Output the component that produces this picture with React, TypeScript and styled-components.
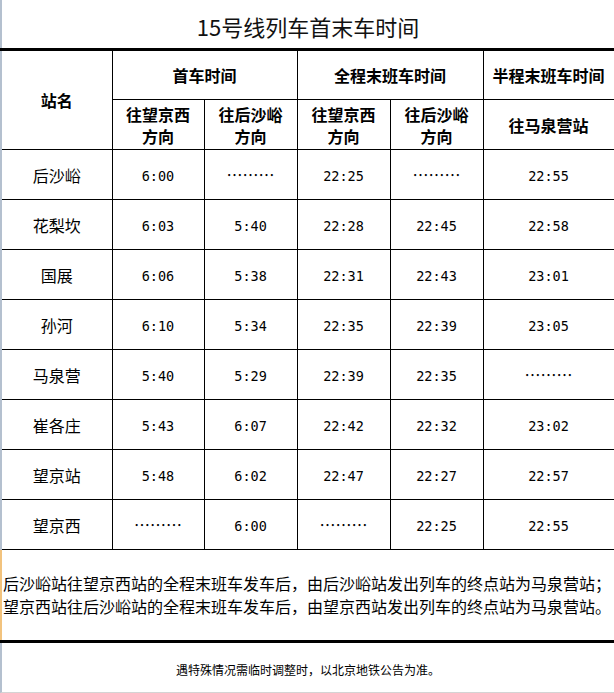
import React from "react";
import styled, { createGlobalStyle } from "styled-components";

const GlobalStyle = createGlobalStyle`
  html, body {
    margin: 0;
    padding: 0;
    background: #fff;
  }
  body {
    font-family: "Noto Sans CJK SC", "Noto Sans", sans-serif;
    color: #000;
  }
`;

const STRIP = "#b4c0cf";
const NOTE_STRIP = "#f2c37e";
const WIDTHS = [111, 92, 93, 93, 93, 131];
const GRID = [113, 92, 93, 93, 93, 128];

type Row = { name: string; times: (string | null)[] };

const rows: Row[] = [
  { name: "后沙峪", times: ["6:00", null, "22:25", null, "22:55"] },
  { name: "花梨坎", times: ["6:03", "5:40", "22:28", "22:45", "22:58"] },
  { name: "国展", times: ["6:06", "5:38", "22:31", "22:43", "23:01"] },
  { name: "孙河", times: ["6:10", "5:34", "22:35", "22:39", "23:05"] },
  { name: "马泉营", times: ["5:40", "5:29", "22:39", "22:35", null] },
  { name: "崔各庄", times: ["5:43", "6:07", "22:42", "22:32", "23:02"] },
  { name: "望京站", times: ["5:48", "6:02", "22:47", "22:27", "22:57"] },
  { name: "望京西", times: [null, "6:00", null, "22:25", "22:55"] },
];

const Sheet = styled.div`
  width: 614px;
  height: 693px;
  overflow: hidden;
`;

const TitleBar = styled.div`
  height: 48px;
  box-sizing: border-box;
  border-left: 2px solid ${STRIP};
  padding-top: 3px;
  display: flex;
  align-items: center;
  justify-content: center;
  font-size: 22px;
  color: #111;
`;

const Table = styled.table`
  width: 613px;
  border-collapse: collapse;
  table-layout: fixed;
  border-top: 3px solid #000;
`;

const GridLineRow = styled.tr`
  height: 50px;
`;

const Cell = styled.td<{ $first?: boolean; $head?: boolean }>`
  border: 1px solid #000;
  ${(p) => (p.$first ? `border-left: 2px solid ${STRIP};` : "")}
  padding: 0;
  text-align: center;
  vertical-align: middle;
  font-size: 16px;
  line-height: 22px;
  font-weight: ${(p) => (p.$head ? 700 : 400)};
`;

const Time = styled.span`
  font-family: "DejaVu Sans Mono", "Liberation Mono", monospace;
  font-size: 13.5px;
`;

const Dots = styled.span`
  font-family: "Noto Sans CJK SC", sans-serif;
  font-size: 16px;
  vertical-align: 2px;
`;

const NoteCell = styled.td`
  border: 1px solid #000;
  border-left: 2px solid ${NOTE_STRIP};
  border-bottom: 3px solid #000;
  height: 90px;
  padding: 0 0 0 1px;
  text-align: left;
  vertical-align: middle;
  font-size: 16px;
  line-height: 23.5px;
  white-space: nowrap;
`;

const NoteLine = styled.div``;

const Footer = styled.div`
  height: 49px;
  box-sizing: border-box;
  border-left: 2px solid ${STRIP};
  padding-top: 3px;
  display: flex;
  align-items: center;
  justify-content: center;
  font-size: 12px;
`;

const GridRow = styled.div`
  display: flex;
  height: 8px;
  border-top: 1px solid #d4d4d4;
  border-left: 2px solid ${STRIP};
`;

const GridCell = styled.div<{ $w: number }>`
  width: ${(p) => p.$w}px;
  flex: none;
  box-sizing: border-box;
  border-right: 1px solid #e2e2e2;
`;

function Value({ v }: { v: string | null }) {
  return v ? <Time>{v}</Time> : <Dots lang="zh-Hans">………</Dots>;
}

export default function App() {
  return (
    <Sheet>
      <GlobalStyle />
      <TitleBar>15号线列车首末车时间</TitleBar>
      <Table>
        <colgroup>
          {WIDTHS.map((w, i) => (
            <col key={i} style={{ width: w }} />
          ))}
        </colgroup>
        <tbody>
          <GridLineRow>
            <Cell $first $head rowSpan={2}>
              站名
            </Cell>
            <Cell $head colSpan={2}>
              首车时间
            </Cell>
            <Cell $head colSpan={2}>
              全程末班车时间
            </Cell>
            <Cell $head>半程末班车时间</Cell>
          </GridLineRow>
          <GridLineRow>
            <Cell $head>
              往望京西
              <br />
              方向
            </Cell>
            <Cell $head>
              往后沙峪
              <br />
              方向
            </Cell>
            <Cell $head>
              往望京西
              <br />
              方向
            </Cell>
            <Cell $head>
              往后沙峪
              <br />
              方向
            </Cell>
            <Cell $head>往马泉营站</Cell>
          </GridLineRow>
          {rows.map((r) => (
            <GridLineRow key={r.name}>
              <Cell $first>{r.name}</Cell>
              {r.times.map((t, i) => (
                <Cell key={i}>
                  <Value v={t} />
                </Cell>
              ))}
            </GridLineRow>
          ))}
          <tr>
            <NoteCell colSpan={6}>
              <NoteLine>
                后沙峪站往望京西站的全程末班车发车后，由后沙峪站发出列车的终点站为马泉营站；
              </NoteLine>
              <NoteLine>
                望京西站往后沙峪站的全程末班车发车后，由望京西站发出列车的终点站为马泉营站。
              </NoteLine>
            </NoteCell>
          </tr>
        </tbody>
      </Table>
      <Footer>遇特殊情况需临时调整时，以北京地铁公告为准。</Footer>
      <GridRow>
        {GRID.map((w, i) => (
          <GridCell key={i} $w={w} />
        ))}
      </GridRow>
    </Sheet>
  );
}
